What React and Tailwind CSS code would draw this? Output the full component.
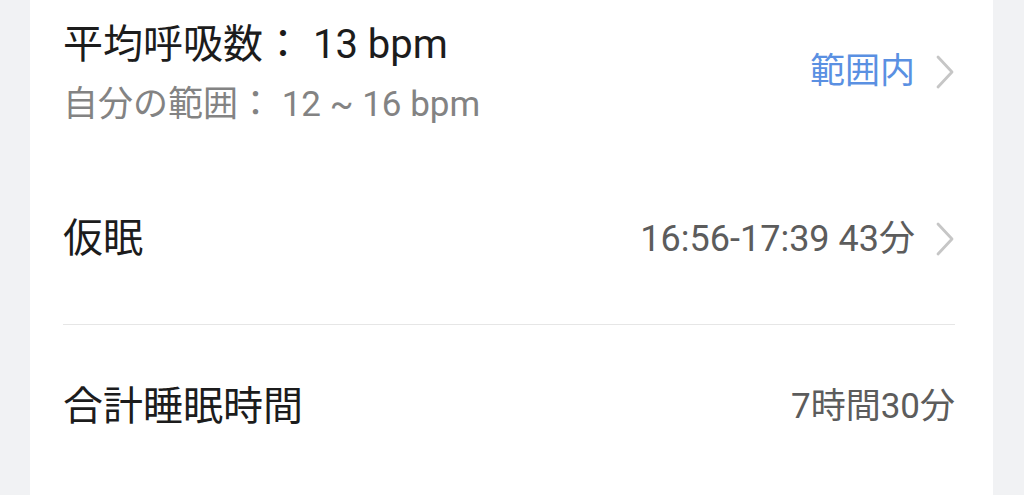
import React from "react";

const Chevron = () => (
  <svg width="20" height="34" viewBox="0 0 20 34" className="ml-[20px] shrink-0">
    <polyline points="3,2 17,17 3,32" fill="none" stroke="#c6c6c6" strokeWidth="2.8" strokeLinecap="round" strokeLinejoin="round" />
  </svg>
);

export default function App() {
  const font = { fontFamily: 'Roboto, "Noto Sans CJK JP", sans-serif' };
  return (
    <div className="w-[1024px] h-[495px] bg-[#f1f2f4] overflow-hidden pl-[30px] pr-[31px]" style={font}>
      <div className="bg-white h-full pl-[33px] pr-[38px]">
        <div className="flex items-center justify-between pt-[20px]">
          <div>
            <div className="text-[40px] leading-[50px] text-[#1c1c1c]">平均呼吸数：&nbsp;13 bpm</div>
            <div className="mt-[12px] text-[35px] leading-[46px] text-[#838383]">自分の範囲：&nbsp;12 ~ 16 bpm</div>
          </div>
          <div className="flex items-center -mt-[4px]">
            <span className="text-[35px] leading-[46px] text-[#5a90e2]">範囲内</span>
            <Chevron />
          </div>
        </div>
        <div className="flex items-center justify-between pt-[86px] pb-[60px] border-b border-[#e6e6e6]">
          <span className="text-[40px] leading-[50px] text-[#1c1c1c]">仮眠</span>
          <div className="flex items-center">
            <span className="text-[36px] leading-[46px] text-[#5c5c5c]">16:56-17:39 43分</span>
            <Chevron />
          </div>
        </div>
        <div className="flex items-center justify-between pt-[57px]">
          <span className="text-[40px] leading-[50px] text-[#1c1c1c]">合計睡眠時間</span>
          <span className="text-[35px] leading-[46px] text-[#5c5c5c]">7時間30分</span>
        </div>
      </div>
    </div>
  );
}
